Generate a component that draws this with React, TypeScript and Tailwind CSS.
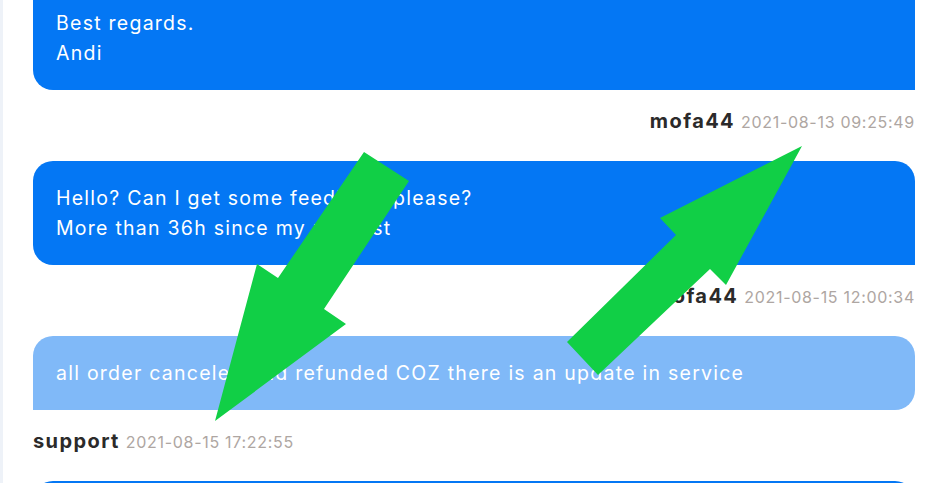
import React from 'react';

type Msg = {
    from: 'user' | 'support';
    lines: string[];
    name: string;
    time: string;
    clipped?: boolean;
};

const messages: Msg[] = [
    { from: 'user', lines: ['Best regards.', 'Andi'], name: 'mofa44', time: '2021-08-13 09:25:49', clipped: true },
    { from: 'user', lines: ['Hello? Can I get some feedback please?', 'More than 36h since my request'], name: 'mofa44', time: '2021-08-15 12:00:34' },
    { from: 'support', lines: ['all order canceled and refunded COZ there is an update in service'], name: 'support', time: '2021-08-15 17:22:55' },
];

const Bubble: React.FC<{ msg: Msg }> = ({ msg }) => {
    const isUser = msg.from === 'user';
    const shape = msg.clipped
        ? 'rounded-bl-[20px] pt-[8px]'
        : isUser
            ? 'rounded-t-[20px] rounded-bl-[20px] pt-[22px]'
            : 'rounded-t-[20px] rounded-br-[20px] pt-[22px]';
    return (
        <div>
            <div
                className={`${shape} ${isUser ? 'bg-[#0477f4]' : 'bg-[#80b9f8]'} pb-[22px] pl-[23px] pr-4 text-white text-[19.5px] leading-[30px] tracking-[1.25px]`}
            >
                {msg.lines.map((l) => (
                    <div key={l}>{l}</div>
                ))}
            </div>
            <div className={`mt-[19px] mb-[28px] h-[24px] leading-[24px] flex items-baseline gap-[6px] ${isUser ? 'justify-end' : 'justify-start'}`}>
                <span className="font-bold text-[20px] tracking-[1.4px] text-[#2b2a2a]">{msg.name}</span>
                <span className="text-[16px] tracking-[0.7px] text-[#aea6a2]">{msg.time}</span>
            </div>
        </div>
    );
};

export default function App() {
    return (
        <div className="relative w-[935px] h-[483px] overflow-hidden bg-white flex" style={{ fontFamily: 'Inter, "Noto Sans", sans-serif' }}>
            <div className="w-[3px] bg-[#eef2f8] shrink-0" />
            <div className="flex-1 pl-[30px] pr-[20px]">
                {messages.map((m, i) => (
                    <Bubble key={i} msg={m} />
                ))}
                <div className="h-[60px] rounded-t-[20px] bg-[#0477f4]" />
            </div>
            <svg className="absolute inset-0 pointer-events-none" width="935" height="483" viewBox="0 0 935 483">
                <polygon
                    fill="#11cf46"
                    points="364,152 409,181 324,309 346,324 215,421 257,264 278,278"
                />
                <polygon
                    fill="#11cf46"
                    points="802,146 726,285 710,269 598,375 567,342 676,235 660,218"
                />
            </svg>
        </div>
    );
}
